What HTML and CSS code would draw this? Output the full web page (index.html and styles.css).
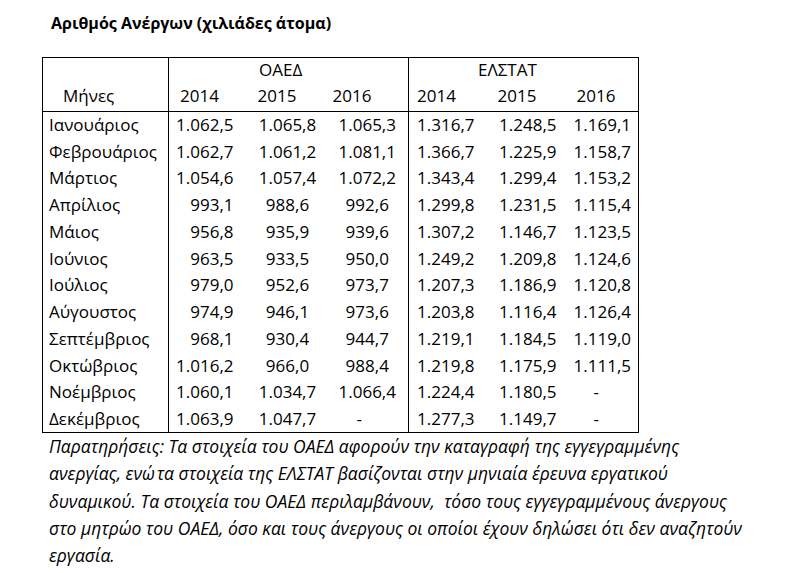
FILE: index.html
```html
<!DOCTYPE html>
<html lang="el">
<head>
<meta charset="utf-8">
<title>Αριθμός Ανέργων</title>
<link rel="stylesheet" href="styles.css">
</head>
<body>
<div class="page">
  <h1 class="title">Αριθμός Ανέργων (χιλιάδες άτομα)</h1>
  <table class="data">
    <colgroup>
      <col class="w-m"><col class="w-a"><col class="w-a"><col class="w-a"><col class="w-b"><col class="w-b"><col class="w-b6">
    </colgroup>
    <thead>
      <tr class="hrow">
        <th class="month-h"></th>
        <th colspan="3" class="grp grp-oaed">ΟΑΕΔ</th>
        <th colspan="3" class="grp grp-elstat sep">ΕΛΣΤΑΤ</th>
      </tr>
      <tr class="hrow">
        <th class="month-h label">Μήνες</th>
        <th class="yr y1">2014</th>
        <th class="yr y2">2015</th>
        <th class="yr y3">2016</th>
        <th class="yr y4 sep">2014</th>
        <th class="yr y5">2015</th>
        <th class="yr y6">2016</th>
      </tr>
    </thead>
    <tbody>
      <tr><td class="m">Ιανουάριος</td><td class="n c1">1.062,5</td><td class="n c2">1.065,8</td><td class="n c3">1.065,3</td><td class="n c4 sep">1.316,7</td><td class="n c5">1.248,5</td><td class="n c6">1.169,1</td></tr>
      <tr><td class="m">Φεβρουάριος</td><td class="n c1">1.062,7</td><td class="n c2">1.061,2</td><td class="n c3">1.081,1</td><td class="n c4 sep">1.366,7</td><td class="n c5">1.225,9</td><td class="n c6">1.158,7</td></tr>
      <tr><td class="m">Μάρτιος</td><td class="n c1">1.054,6</td><td class="n c2">1.057,4</td><td class="n c3">1.072,2</td><td class="n c4 sep">1.343,4</td><td class="n c5">1.299,4</td><td class="n c6">1.153,2</td></tr>
      <tr><td class="m">Απρίλιος</td><td class="n c1">993,1</td><td class="n c2">988,6</td><td class="n c3">992,6</td><td class="n c4 sep">1.299,8</td><td class="n c5">1.231,5</td><td class="n c6">1.115,4</td></tr>
      <tr><td class="m">Μάιος</td><td class="n c1">956,8</td><td class="n c2">935,9</td><td class="n c3">939,6</td><td class="n c4 sep">1.307,2</td><td class="n c5">1.146,7</td><td class="n c6">1.123,5</td></tr>
      <tr><td class="m">Ιούνιος</td><td class="n c1">963,5</td><td class="n c2">933,5</td><td class="n c3">950,0</td><td class="n c4 sep">1.249,2</td><td class="n c5">1.209,8</td><td class="n c6">1.124,6</td></tr>
      <tr><td class="m">Ιούλιος</td><td class="n c1">979,0</td><td class="n c2">952,6</td><td class="n c3">973,7</td><td class="n c4 sep">1.207,3</td><td class="n c5">1.186,9</td><td class="n c6">1.120,8</td></tr>
      <tr><td class="m">Αύγουστος</td><td class="n c1">974,9</td><td class="n c2">946,1</td><td class="n c3">973,6</td><td class="n c4 sep">1.203,8</td><td class="n c5">1.116,4</td><td class="n c6">1.126,4</td></tr>
      <tr><td class="m">Σεπτέμβριος</td><td class="n c1">968,1</td><td class="n c2">930,4</td><td class="n c3">944,7</td><td class="n c4 sep">1.219,1</td><td class="n c5">1.184,5</td><td class="n c6">1.119,0</td></tr>
      <tr><td class="m">Οκτώβριος</td><td class="n c1">1.016,2</td><td class="n c2">966,0</td><td class="n c3">988,4</td><td class="n c4 sep">1.219,8</td><td class="n c5">1.175,9</td><td class="n c6">1.111,5</td></tr>
      <tr><td class="m">Νοέμβριος</td><td class="n c1">1.060,1</td><td class="n c2">1.034,7</td><td class="n c3">1.066,4</td><td class="n c4 sep">1.224,4</td><td class="n c5">1.180,5</td><td class="dash d6">-</td></tr>
      <tr><td class="m">Δεκέμβριος</td><td class="n c1">1.063,9</td><td class="n c2">1.047,7</td><td class="dash d3">-</td><td class="n c4 sep">1.277,3</td><td class="n c5">1.149,7</td><td class="dash d6">-</td></tr>
    </tbody>
  </table>
  <p class="note">Παρατηρήσεις: Τα στοιχεία του ΟΑΕΔ αφορούν την καταγραφή της εγγεγραμμένης<br>ανεργίας, ενώ&#8202;τα στοιχεία της ΕΛΣΤΑΤ βασίζονται στην μηνιαία έρευνα εργατικού<br>δυναμικού. Τα στοιχεία του ΟΑΕΔ περιλαμβάνουν, &nbsp;τόσο τους εγγεγραμμένους άνεργους<br>στο μητρώο του ΟΑΕΔ, όσο και τους άνεργους οι οποίοι έχουν δηλώσει ότι δεν αναζητούν<br>εργασία.</p>
</div>
</body>
</html>
```

FILE: styles.css
```css
html, body {
  margin: 0;
  padding: 0;
  background: #ffffff;
}

body {
  font-family: "Open Sans", "Noto Sans", "DejaVu Sans", sans-serif;
  color: #000000;
  width: 802px;
  height: 573px;
  overflow: hidden;
}

.page {
  padding: 11px 0 0 42px;
}

.title {
  margin: 0 0 22px 9px;
  font-size: 16px;
  line-height: 24px;
  font-weight: 700;
  white-space: nowrap;
}

.data {
  border-collapse: collapse;
  table-layout: fixed;
  width: 597px;
  font-size: 17px;
  border: 1px solid #000;
}

.w-m { width: 126px; }
.w-a { width: 80px; }
.w-b { width: 77px; }
.w-b6 { width: 76px; }

.data th,
.data td {
  padding: 0;
  font-weight: 400;
  white-space: nowrap;
  line-height: 20px;
  vertical-align: middle;
}

.data th { padding-bottom: 3px; }

.hrow { height: 27px; }
.data tbody tr { height: 26.75px; }

.data thead tr:last-child th { border-bottom: 1px solid #000; }

.month-h { border-right: 1px solid #000; text-align: left; }
.label { padding-left: 20px !important; }

.sep { border-left: 1px solid #000; }

.grp { text-align: left; }
.grp-oaed { padding-left: 90px !important; }
.grp-elstat { padding-left: 69px !important; }

.yr { text-align: left; }
.y1 { padding-left: 11px !important; }
.y2 { padding-left: 9px !important; }
.y3 { padding-left: 4px !important; }
.y4 { padding-left: 8px !important; }
.y5 { padding-left: 12px !important; }
.y6 { padding-left: 14px !important; }

.m {
  text-align: left;
  padding-left: 6px !important;
  border-right: 1px solid #000;
}

.n { text-align: right; }
.c1 { padding-right: 15px !important; }
.c2 { text-align: center; padding-right: 2px !important; }
.c3 { text-align: center; padding-right: 2px !important; }
.c4 { padding-right: 11px !important; }
.c5 { padding-right: 6px !important; }
.c6 { padding-right: 7px !important; }

.dash { text-align: left; }
.d3 { padding-left: 28px !important; }
.d6 { padding-left: 31px !important; }

.note {
  margin: 0 0 0 7px;
  font-size: 17.5px;
  line-height: 27.3px;
  font-style: italic;
  white-space: nowrap;
}
```
